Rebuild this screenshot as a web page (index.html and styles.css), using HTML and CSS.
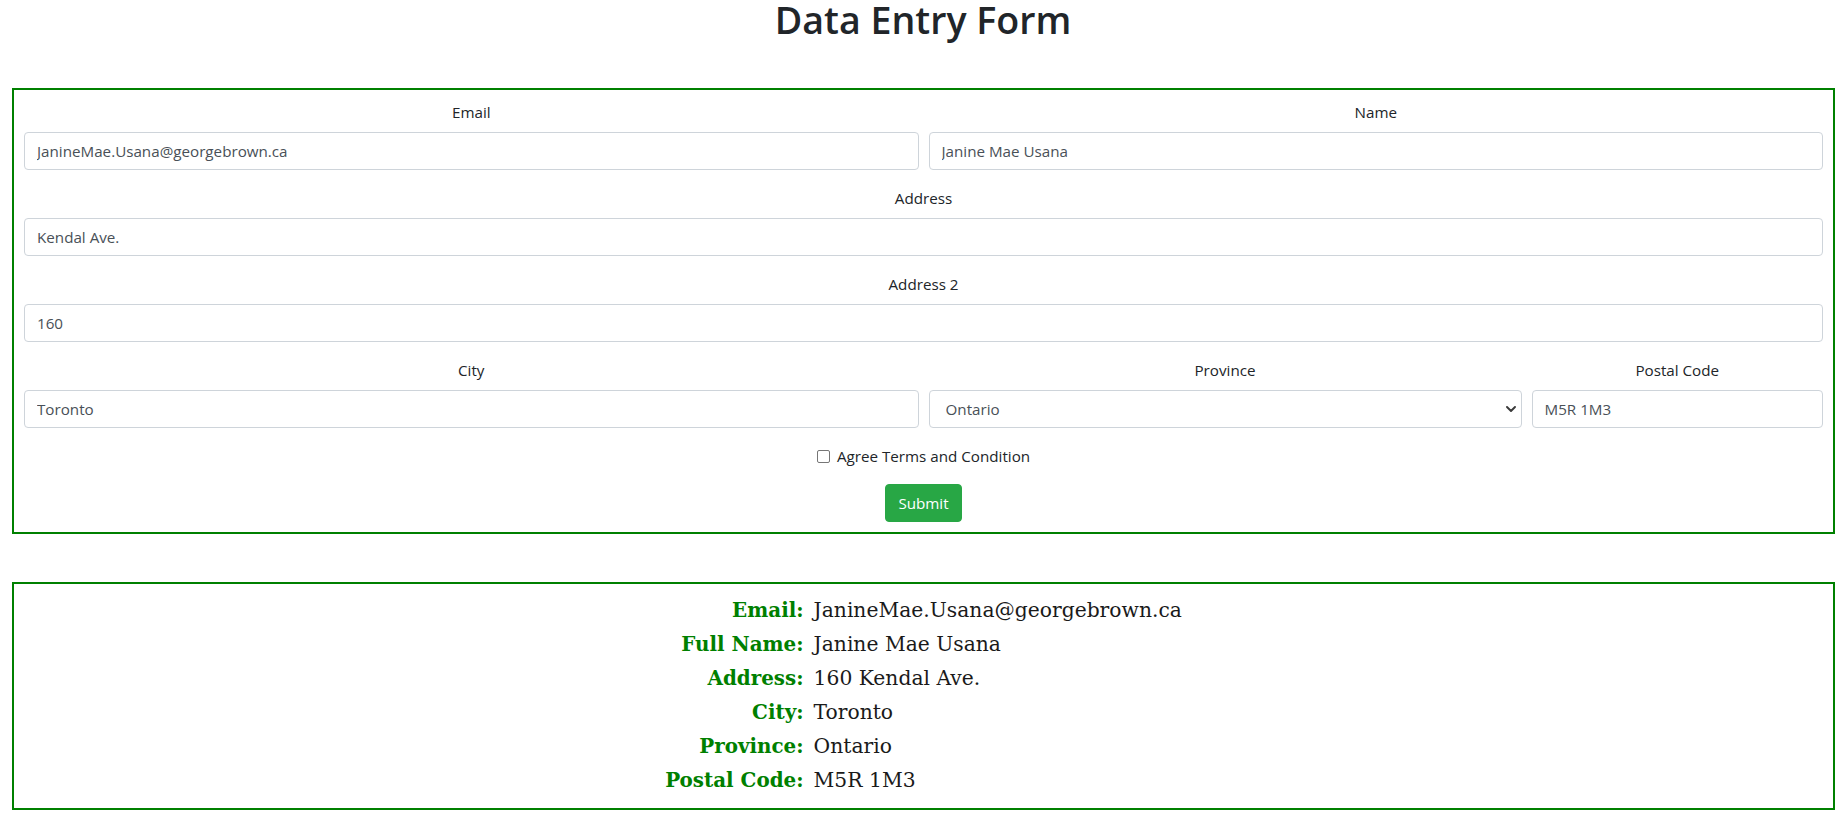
FILE: index.html
```html
<!DOCTYPE html>
<html lang="en">
<head>
<meta charset="utf-8">
<title>Data Entry Form</title>
<link rel="stylesheet" href="styles.css">
</head>
<body>
<h1 class="title">Data Entry Form</h1>
<form class="panel entry-form">
  <div class="row row-two">
    <div class="group">
      <label class="field-label" for="email">Email</label>
      <input class="control" id="email" type="text" value="JanineMae.Usana@georgebrown.ca">
    </div>
    <div class="group">
      <label class="field-label" for="name">Name</label>
      <input class="control" id="name" type="text" value="Janine Mae Usana">
    </div>
  </div>
  <div class="group">
    <label class="field-label" for="address">Address</label>
    <input class="control" id="address" type="text" value="Kendal Ave.">
  </div>
  <div class="group">
    <label class="field-label" for="address2">Address 2</label>
    <input class="control" id="address2" type="text" value="160">
  </div>
  <div class="row row-three">
    <div class="group">
      <label class="field-label" for="city">City</label>
      <input class="control" id="city" type="text" value="Toronto">
    </div>
    <div class="group">
      <label class="field-label" for="province">Province</label>
      <div class="select-wrap">
        <select class="control select" id="province">
          <option>Ontario</option>
        </select>
        <svg class="chevron" width="10" height="6" viewBox="0 0 10 6" aria-hidden="true"><path d="M1 1l4 4 4-4" fill="none" stroke="#3a3a3a" stroke-width="1.9" stroke-linecap="round" stroke-linejoin="round"/></svg>
      </div>
    </div>
    <div class="group">
      <label class="field-label" for="postal">Postal Code</label>
      <input class="control" id="postal" type="text" value="M5R 1M3">
    </div>
  </div>
  <div class="group check-group">
    <input class="checkbox" id="agree" type="checkbox">
    <label class="check-label" for="agree">Agree Terms and Condition</label>
  </div>
  <div class="actions">
    <button class="btn-submit" type="button">Submit</button>
  </div>
</form>
<div class="panel summary">
  <table class="summary-table">
    <tr><th>Email:</th><td>JanineMae.Usana@georgebrown.ca</td></tr>
    <tr><th>Full Name:</th><td>Janine Mae Usana</td></tr>
    <tr><th>Address:</th><td>160 Kendal Ave.</td></tr>
    <tr><th>City:</th><td>Toronto</td></tr>
    <tr><th>Province:</th><td>Ontario</td></tr>
    <tr><th>Postal Code:</th><td>M5R 1M3</td></tr>
  </table>
</div>
</body>
</html>
```

FILE: styles.css
```css
* { box-sizing: border-box; }

html, body {
  margin: 0;
  padding: 0;
  background: #fff;
}

body {
  font-family: "Open Sans", "Noto Sans", sans-serif;
  font-size: 15.2px;
  color: #212529;
}

.title {
  margin: 0 0 40px;
  height: 48px;
  line-height: 40px;
  font-size: 37.6px;
  font-weight: 600;
  text-align: center;
  color: #212529;
}

.panel {
  margin: 0 11px 0 12px;
  border: 2px solid #008000;
  padding: 10px;
}

.entry-form {
  text-align: center;
}

.row {
  display: grid;
  column-gap: 10px;
}

.row-two {
  grid-template-columns: 1fr 1fr;
}

.row-three {
  grid-template-columns: 894.5fr 593fr 291.5fr;
}

.group {
  margin-bottom: 16px;
}

.field-label {
  display: block;
  height: 24px;
  line-height: 24px;
  margin-bottom: 8px;
}

.control {
  display: block;
  width: 100%;
  height: 38px;
  padding: 6px 12px;
  font-family: inherit;
  font-size: 15.2px;
  line-height: 24px;
  color: #495057;
  background: #fff;
  border: 1px solid #ced4da;
  border-radius: 4px;
  text-align: left;
  outline: none;
}

.select-wrap {
  position: relative;
}

.select {
  appearance: none;
  -webkit-appearance: none;
  padding-left: 16px;
  padding-right: 28px;
}

.chevron {
  position: absolute;
  right: 6px;
  top: 16px;
}

.check-group {
  display: flex;
  justify-content: center;
  align-items: center;
  height: 24px;
}

.checkbox {
  appearance: none;
  -webkit-appearance: none;
  width: 13px;
  height: 13px;
  margin: 0 7px 0 0;
  border: 1px solid #767676;
  border-radius: 2px;
  background: #fff;
}

.check-label {
  line-height: 24px;
}

.actions {
  display: flex;
  justify-content: center;
}

.btn-submit {
  height: 38px;
  padding: 6px 12px;
  font-family: inherit;
  font-size: 15.2px;
  line-height: 24px;
  color: #fff;
  background: #28a745;
  border: 1px solid #28a745;
  border-radius: 4px;
}

.summary {
  margin-top: 48px;
  padding: 9px 10px 11px;
}

.summary-table {
  margin: 0 auto;
  border-collapse: collapse;
  font-family: "DejaVu Serif", "Liberation Serif", serif;
  font-size: 20.3px;
}

.summary-table th,
.summary-table td {
  height: 34px;
  padding: 0;
  vertical-align: middle;
}

.summary-table th {
  text-align: right;
  color: #008000;
  font-weight: bold;
  padding-right: 10px;
  font-size: 19.9px;
}

.summary-table td {
  text-align: left;
  color: #1a1a1a;
}
```
